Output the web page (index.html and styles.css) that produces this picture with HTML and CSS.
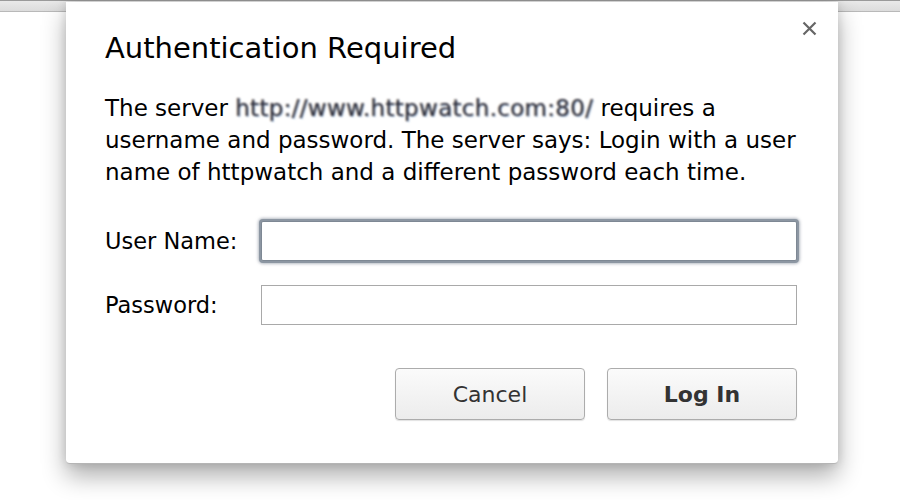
FILE: index.html
```html
<!DOCTYPE html>
<html>
<head>
<meta charset="utf-8">
<link rel="stylesheet" href="styles.css">
</head>
<body>
<div class="topbar"></div>
<div class="dialog">
  <button class="close" aria-label="Close">
    <svg width="15" height="15" viewBox="0 0 15 15"><path d="M1.5 1.5 L13.5 13.5 M13.5 1.5 L1.5 13.5" stroke="#666666" stroke-width="2.2" stroke-linecap="butt"/></svg>
  </button>
  <h1 class="title">Authentication Required</h1>
  <p class="msg">The server <span class="url">http://www.httpwatch.com:80/</span> requires a<br>username and password. The server says: Login with a user<br>name of httpwatch and a different password each time.</p>
  <div class="fields">
    <label class="label" for="u">User Name:</label>
    <input class="input focused" id="u" type="text">
    <label class="label" for="p">Password:</label>
    <input class="input" id="p" type="password">
  </div>
  <div class="actions">
    <button class="btn">Cancel</button>
    <button class="btn primary">Log In</button>
  </div>
</div>
</body>
</html>
```
FILE: styles.css
```css
html, body {
  margin: 0;
  padding: 0;
  background: #ffffff;
  width: 900px;
  height: 500px;
  overflow: hidden;
  font-family: "DejaVu Sans", "Noto Sans", sans-serif;
  color: #000;
}
.topbar {
  height: 10px;
  border-top: 1px solid #9a9a9a;
  border-bottom: 1px solid #b9b9b9;
  background: linear-gradient(#e9e9e9, #dcdcdc);
}
.dialog {
  position: absolute;
  left: 66px;
  top: 2px;
  width: 772px;
  box-sizing: border-box;
  padding: 30px 41px 43px 39px;
  background: #fff;
  border-radius: 0 0 4px 4px;
  border-bottom: 1px solid #b5b5b5;
  box-shadow: 0 12px 24px rgba(0,0,0,0.32), 0 0 10px rgba(0,0,0,0.12);
}
.close {
  position: absolute;
  right: 21px;
  top: 19px;
  width: 15px;
  height: 15px;
  padding: 0;
  border: 0;
  background: none;
  display: flex;
}
.title {
  margin: 0;
  font-size: 29px;
  font-weight: normal;
  line-height: 32px;
  color: #000;
}
.msg {
  margin: 28px 0 0;
  font-size: 23px;
  line-height: 32px;
  color: #000;
}
.url {
  color: #2a2a38;
  letter-spacing: 0.3px;
  filter: blur(1px);
  text-shadow: 1px 1px 0 rgba(70,130,200,0.45), -1px 0 0 rgba(210,150,70,0.35);
  display: inline-block;
}
.fields {
  margin-top: 33px;
  display: grid;
  grid-template-columns: 156px 536px;
  row-gap: 24px;
  align-items: center;
}
.label {
  font-size: 22.5px;
  color: #000;
}
.input {
  height: 40px;
  box-sizing: border-box;
  border: 1px solid #a9a9a9;
  margin: 0;
  background: #fff;
  outline: none;
}
.focused {
  border: 1px solid #7e8894;
  box-shadow: 0 0 0 2px #8c96a2, 0 0 3px 3px rgba(120,130,145,0.55);
  border-radius: 2px;
}
.actions {
  margin-top: 43px;
  display: flex;
  justify-content: flex-end;
  gap: 22px;
}
.btn {
  width: 190px;
  height: 52px;
  border: 1px solid #acacac;
  border-radius: 4px;
  background: linear-gradient(#fbfbfb, #ececec);
  box-shadow: 0 1px 1px rgba(0,0,0,0.12);
  font-family: "DejaVu Sans", "Noto Sans", sans-serif;
  font-size: 22px;
  color: #333;
  padding: 0;
}
.primary {
  font-weight: bold;
}
```
